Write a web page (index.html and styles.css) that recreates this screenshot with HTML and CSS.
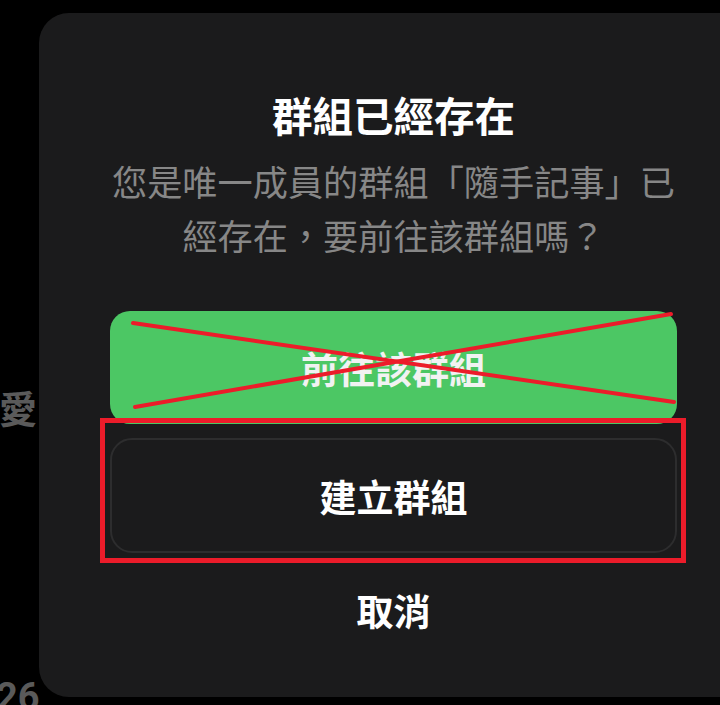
FILE: index.html
```html
<!DOCTYPE html>
<html lang="zh-Hant">
<head>
<meta charset="utf-8">
<title>群組已經存在</title>
<link rel="stylesheet" href="styles.css">
</head>
<body>
<div class="page">
  <div class="behind behind-love">愛</div>
  <div class="behind behind-num">26</div>
  <div class="dialog">
    <h1 class="title">群組已經存在</h1>
    <p class="message">您是唯一成員的群組「隨手記事」已經存在，要前往該群組嗎？</p>
    <div class="actions">
      <button class="btn btn-primary">前往該群組</button>
      <button class="btn btn-outline">建立群組</button>
      <button class="btn btn-text">取消</button>
    </div>
  </div>
  <svg class="annot" width="720" height="705" viewBox="0 0 720 705">
    <line x1="133" y1="323" x2="674" y2="402" />
    <line x1="135" y1="407" x2="671" y2="314" />
    <rect x="102.5" y="420.5" width="581" height="140" />
  </svg>
</div>
</body>
</html>
```
FILE: styles.css
```css
html, body {
  margin: 0;
  padding: 0;
  background: #000;
}
body {
  width: 720px;
  height: 705px;
  overflow: hidden;
  font-family: "Noto Sans CJK TC", "Noto Sans", sans-serif;
}
.page {
  position: relative;
  width: 720px;
  height: 705px;
  overflow: hidden;
}
.behind {
  position: absolute;
  color: #5a5a5a;
  font-weight: 700;
}
.behind-love {
  left: -1px;
  top: 382px;
  font-size: 38px;
  line-height: 50px;
}
.behind-num {
  left: -4px;
  top: 672px;
  font-family: "Roboto", "Noto Sans", sans-serif;
  font-size: 38px;
  line-height: 50px;
}
.dialog {
  position: absolute;
  left: 39px;
  top: 13px;
  width: 709px;
  height: 684px;
  box-sizing: border-box;
  background: #1b1b1c;
  border-radius: 30px;
  padding: 78px 71px 0;
  display: flex;
  flex-direction: column;
  align-items: center;
}
.title {
  margin: 0;
  color: #fff;
  font-size: 40.5px;
  font-weight: 700;
  line-height: 48px;
  text-align: center;
}
.message {
  margin: 15px 0 0;
  width: 567px;
  color: #878787;
  font-size: 35.2px;
  font-weight: 400;
  line-height: 54px;
  text-align: center;
}
.actions {
  margin-top: 49px;
  width: 567px;
  display: flex;
  flex-direction: column;
  gap: 14px;
}
.btn {
  display: block;
  width: 100%;
  margin: 0;
  padding: 0;
  font-family: inherit;
  font-size: 37px;
  font-weight: 700;
  line-height: 50px;
  text-align: center;
  cursor: pointer;
}
.btn-primary {
  height: 113px;
  background: #4cc764;
  color: #f2f2f2;
  border: none;
  border-radius: 20px;
}
.btn-outline {
  height: 115px;
  background: #1b1b1c;
  color: #fff;
  border: 2px solid #2d2d2e;
  border-radius: 22px;
}
.btn-text {
  height: 85px;
  background: transparent;
  color: #fff;
  border: none;
}
.annot {
  position: absolute;
  left: 0;
  top: 0;
  pointer-events: none;
}
.annot line {
  stroke: #ec1c2a;
  stroke-width: 4;
  stroke-linecap: round;
}
.annot rect {
  fill: none;
  stroke: #ec1c2a;
  stroke-width: 5;
}
```
